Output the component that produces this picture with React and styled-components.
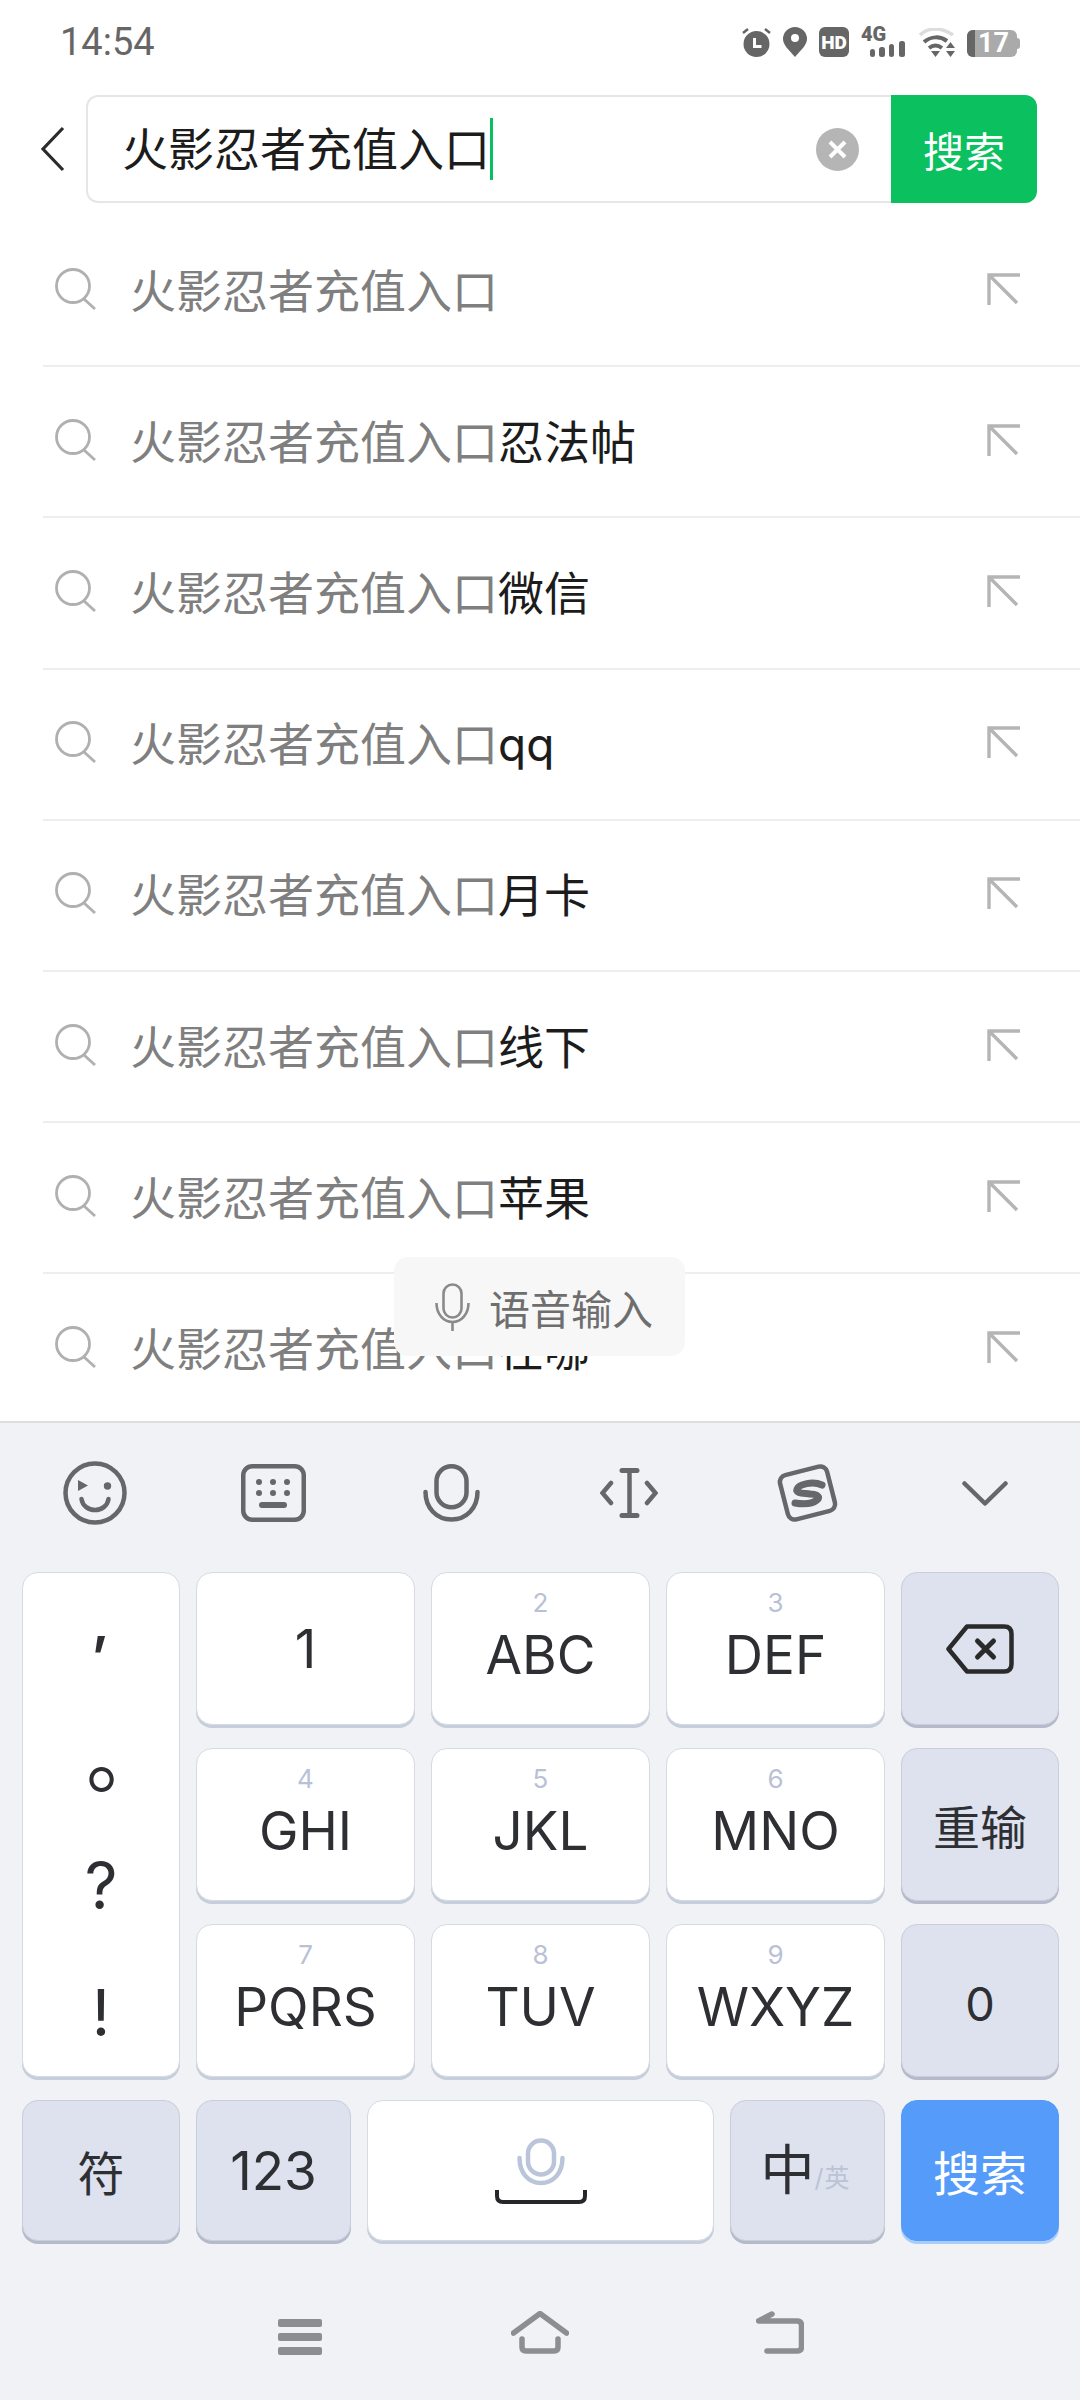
import React from "react";
import styled, { createGlobalStyle } from "styled-components";

const GlobalStyle = createGlobalStyle`
  html, body {
    margin: 0;
    padding: 0;
    background: #ffffff;
  }
  * {
    box-sizing: border-box;
  }
`;

const CJK = `Inter, "Noto Sans CJK SC", sans-serif`;

const Page = styled.div`
  position: relative;
  display: flex;
  flex-direction: column;
  width: 1080px;
  height: 2400px;
  overflow: hidden;
  background: #ffffff;
  font-family: ${CJK};
`;

const StatusBar = styled.div`
  display: flex;
  flex: none;
  align-items: center;
  justify-content: space-between;
  height: 95px;
  padding: 0 60px 11px;
`;

const Time = styled.div`
  font-family: Roboto, sans-serif;
  font-size: 38px;
  color: #666666;
`;

const StatusIcons = styled.div`
  display: flex;
  align-items: flex-end;
  gap: 12px;
  height: 30px;
`;

const HdBadge = styled.div`
  display: flex;
  align-items: center;
  justify-content: center;
  width: 30px;
  height: 30px;
  border-radius: 6px;
  background: #666666;
  color: #ffffff;
  font-family: Roboto, sans-serif;
  font-size: 19px;
  font-weight: 900;
`;

const Network = styled.div`
  display: flex;
  flex-direction: column;
  width: 44px;
  height: 30px;
  margin-right: 2px;
`;

const NetworkLabel = styled.div`
  height: 14px;
  font-family: Roboto, sans-serif;
  font-size: 20px;
  font-weight: 900;
  line-height: 14px;
  color: #666666;
`;

const Battery = styled.div`
  position: relative;
  display: flex;
  width: 50px;
  height: 27px;
  margin-right: 3px;
  border-radius: 6px;
  overflow: visible;
  background: #aaaaaa;
`;

const BatteryLevel = styled.div`
  flex: none;
  width: 8px;
  border-radius: 6px 0 0 6px;
  background: #666666;
`;

const BatteryText = styled.div`
  padding-left: 3px;
  font-family: Roboto, sans-serif;
  font-size: 27px;
  font-weight: 700;
  line-height: 27px;
  color: #ffffff;
`;

const BatteryNub = styled.div`
  position: absolute;
  top: 8px;
  right: -3px;
  width: 3px;
  height: 11px;
  border-radius: 0 3px 3px 0;
  background: #aaaaaa;
`;

const SearchRow = styled.div`
  display: flex;
  flex: none;
  align-items: center;
  height: 108px;
  margin-bottom: 13px;
  padding: 0 43px 0 40px;
`;

const SearchBox = styled.div`
  display: flex;
  flex: 1;
  align-items: center;
  height: 108px;
  margin-left: 21px;
  padding-left: 34px;
  border: 2px solid #e6e6e6;
  border-right: 0;
  border-radius: 12px;
`;

const SearchText = styled.div`
  font-size: 46px;
  line-height: 62px;
  color: #1c1c1c;
`;

const Caret = styled.div`
  width: 3px;
  height: 62px;
  background: #07c160;
`;

const ClearIcon = styled.svg`
  margin-left: auto;
  margin-right: 32px;
`;

const SearchButton = styled.div`
  display: flex;
  align-items: center;
  justify-content: center;
  width: 146px;
  height: 108px;
  margin: -2px 0;
  border-radius: 0 12px 12px 0;
  background: #0bc15f;
  color: #ffffff;
  font-size: 41px;
`;

const List = styled.div`
  flex: 1;
  min-height: 0;
  overflow: hidden;
  padding-left: 43px;
`;

const Row = styled.div`
  display: flex;
  flex: none;
  align-items: center;
  height: 151.200px;
  padding: 0 59px 4px 12px;
  border-bottom: 2px solid ${({ $last }) => ($last ? "transparent" : "#eeeeee")};
`;

const RowText = styled.div`
  flex: 1;
  margin: -2px 0 0 33px;
  font-size: 46px;
  color: #1c1c1c;
`;

const Prefix = styled.span`
  color: #7f7f7f;
`;

const VoiceHint = styled.div`
  position: absolute;
  top: 1257px;
  left: 394px;
  display: flex;
  align-items: center;
  gap: 19px;
  width: 291px;
  height: 99px;
  padding-left: 41px;
  border-radius: 14px;
  background: #f7f7f7;
  color: #6e6e6e;
  font-size: 41px;
`;

const Keyboard = styled.div`
  display: flex;
  flex: none;
  flex-direction: column;
  height: 979px;
  border-top: 2px solid #dedede;
  background: #f0f2f6;
`;

const Toolbar = styled.div`
  display: grid;
  flex: none;
  grid-template-columns: repeat(6, 178px);
  height: 149px;
  padding-left: 6px;
`;

const ToolCell = styled.div`
  display: flex;
  align-items: center;
  justify-content: center;
  height: 140px;
`;

const KeyGrid = styled.div`
  display: grid;
  flex: none;
  grid-template-columns: 158px 219px 219px 219px 158px;
  grid-auto-rows: 153px;
  gap: 23px 16px;
  padding-left: 22px;
`;

const tones = {
  light: { bg: "#ffffff", edge: "#c6cddc", line: "#d6dae2", color: "#2e2f33" },
  grey: { bg: "#dde2ee", edge: "#b4bac9", line: "#c9cedb", color: "#2e2f33" },
  blue: { bg: "#559bf9", edge: "#a9cdfb", line: "#559bf9", color: "#ffffff" }
};

const Key = styled.div`
  display: flex;
  flex-direction: column;
  align-items: center;
  justify-content: ${({ $top }) => ($top ? "flex-start" : "center")};
  padding-top: ${({ $drop = 0 }) => $drop}px;
  border-radius: 16px;
  border: 1px solid ${({ $tone = "light" }) => tones[$tone].line};
  background: ${({ $tone = "light" }) => tones[$tone].bg};
  box-shadow: 0 3px 0 ${({ $tone = "light" }) => tones[$tone].edge};
  color: ${({ $tone = "light" }) => tones[$tone].color};
  font-size: ${({ $size = 53 }) => $size}px;
`;

const PunctKey = styled(Key)`
  grid-column: 1;
  grid-row: 1 / span 3;
  justify-content: flex-start;
`;

const Punct = styled.div`
  display: flex;
  align-items: center;
  justify-content: center;
  height: ${({ $h }) => $h}px;
  font-size: ${({ $size }) => $size}px;
  font-weight: ${({ $weight = 400 }) => $weight};
  line-height: 1;
  transform: translate(${({ $x = 0 }) => $x}px, ${({ $y = 0 }) => $y}px);
`;

const Digit = styled.div`
  height: 26px;
  margin-top: 17px;
  font-size: 26px;
  line-height: 26px;
  color: #b8c1d6;
`;

const Letters = styled.div`
  height: 58px;
  margin-top: 10px;
  line-height: 58px;
`;

const BottomRow = styled.div`
  display: grid;
  flex: none;
  grid-template-columns: 158px 155px 347px 155px 158px;
  grid-auto-rows: 141px;
  gap: 16px;
  margin-top: 23px;
  padding-left: 22px;
`;

const LangKey = styled(Key)`
  flex-direction: row;
  align-items: center;
  justify-content: center;
`;

const LangMain = styled.span`
  margin: -8px 0 0 -4px;
  font-size: 54px;
`;

const LangAlt = styled.span`
  margin-top: 10px;
  font-size: 25px;
  letter-spacing: 1px;
  color: #bbc3d6;
`;

const NavBar = styled.div`
  display: grid;
  flex: 1;
  grid-template-columns: repeat(3, 240px);
  justify-content: center;
  align-items: end;
  padding-bottom: 45px;
`;

const NavCell = styled.div`
  display: flex;
  justify-content: center;
`;

const gray = "#65676b";

const IconBack = () => (
  <svg width="25" height="46" viewBox="0 0 25 46" fill="none" stroke="#2b2b2b" strokeWidth="3.2">
    <path d="M23 2 3 23l20 21" />
  </svg>
);

const IconAlarm = () => (
  <svg width="29" height="29" viewBox="0 0 29 29">
    <circle cx="14.5" cy="16" r="13" fill="#666" />
    <path d="M1 5l5-4M28 5l-5-4" stroke="#666" strokeWidth="2.5" fill="none" />
    <path d="M12.5 10v8.5h7" stroke="#fff" strokeWidth="3" fill="none" />
  </svg>
);

const IconPin = () => (
  <svg width="24" height="30" viewBox="0 0 24 30">
    <path d="M12 30C6 23 0 18 0 12a12 12 0 0 1 24 0c0 6-6 11-12 18z" fill="#666" />
    <circle cx="12" cy="11" r="4" fill="#fff" />
  </svg>
);

const IconBars = () => (
  <svg width="44" height="16" viewBox="0 0 44 16">
    <rect x="9" y="8" width="5" height="8" rx="2.5" fill="#666" />
    <rect x="18" y="6" width="6" height="10" rx="2.5" fill="#666" />
    <rect x="28" y="3" width="5" height="13" rx="2.5" fill="#666" />
    <rect x="38" y="0" width="6" height="16" rx="2.5" fill="#666" />
  </svg>
);

const IconWifi = () => (
  <svg width="36" height="29" viewBox="0 0 36 29" fill="none">
    <path d="M1 7C9-1 23-1 34 7" stroke="#dcdcdc" strokeWidth="3.5" />
    <path d="M5 14c7-6 16-6 23-1" stroke="#666" strokeWidth="4" />
    <path d="M10 20c4-3 9-3 13 0" stroke="#666" strokeWidth="4" />
    <path d="M12 23h9l-4.500 6z" fill="#666" />
    <path d="M27 20h9l-4.500-6zM27 23h9l-4.500 6z" fill="#666" />
  </svg>
);

const IconClear = () => (
  <ClearIcon width="43" height="43" viewBox="0 0 43 43">
    <circle cx="21.500" cy="21.500" r="21.500" fill="#b5b5b5" />
    <path d="M14 14l15 15M29 14 14 29" stroke="#fff" strokeWidth="4" />
  </ClearIcon>
);

const IconSearch = () => (
  <svg width="42" height="42" viewBox="0 0 42 42" fill="none" stroke="#b0b0b0" strokeWidth="2.8">
    <circle cx="18" cy="18" r="16.500" />
    <path d="M29 31l11 10" />
  </svg>
);

const IconFill = () => (
  <svg width="34" height="32" viewBox="0 0 34 32" fill="none" stroke="#b5b5b5" strokeWidth="3.4">
    <path d="M33 2H2v30M3 3l27 27" />
  </svg>
);

const IconVoiceHint = () => (
  <svg width="35" height="48" viewBox="0 0 35 48" fill="none" stroke="#8a8a8a" strokeWidth="2.600">
    <rect x="8.500" y="1.500" width="18" height="33" rx="9" />
    <path d="M1.500 20c0 11 7 19 16 19s16-8 16-19M17.500 39v9" />
  </svg>
);

const IconSmile = () => (
  <svg width="64" height="64" viewBox="0 0 64 64" fill="none" stroke={gray} strokeWidth="4.500" strokeLinecap="round">
    <circle cx="32" cy="32" r="29.500" />
    <path d="M15 19l10 5.500-10 5.500z" fill={gray} stroke="none" />
    <circle cx="44.500" cy="25" r="3.700" fill={gray} stroke="none" />
    <path d="M18.500 38c1 7 7 11 13.500 11s12.500-4 13.500-11" />
  </svg>
);

const IconKeys = () => (
  <svg width="65" height="58" viewBox="0 0 65 58" fill="none" stroke={gray} strokeWidth="4.500">
    <rect x="2.250" y="2.250" width="60.500" height="53.500" rx="9" />
    <g fill={gray} stroke="none">
      <circle cx="18" cy="18" r="3" />
      <circle cx="32" cy="18" r="3" />
      <circle cx="46" cy="18" r="3" />
      <circle cx="18" cy="29" r="3" />
      <circle cx="32" cy="29" r="3" />
      <circle cx="46" cy="29" r="3" />
      <rect x="18" y="38" width="28" height="6" rx="3" />
    </g>
  </svg>
);

const IconMic = () => (
  <svg width="57" height="58" viewBox="0 0 57 58" fill="none" stroke={gray} strokeWidth="4.500" strokeLinecap="round">
    <rect x="13.500" y="2.250" width="30" height="41" rx="15" />
    <path d="M2.500 28c0 16 11 27.500 26 27.500s26-11.500 26-27.500" />
  </svg>
);

const IconCursor = () => (
  <svg width="58" height="50" viewBox="0 0 58 50" fill="none" stroke={gray} strokeWidth="4.500" strokeLinecap="round">
    <path d="M22 2.500h15M22 47.500h15" strokeWidth="5" />
    <path d="M29.500 2.500v45" />
    <path d="M11 15 2.500 25l8.500 10M47 15l8.500 10L47 35" />
  </svg>
);

const IconSogou = () => (
  <svg width="65" height="64" viewBox="0 0 65 64" fill="none">
    <g transform="rotate(-14.300 32.500 32)">
      <rect x="8.250" y="9.200" width="48.500" height="45.600" rx="7" stroke={gray} strokeWidth="4.500" />
    </g>
    <path
      d="M47 24C38 20 24 23 22 28 20 33 30 32 35 33 42 33 46 36 42 39 36 44 26 43 20 42"
      stroke={gray}
      strokeWidth="7"
      strokeLinecap="round"
    />
  </svg>
);

const IconCollapse = () => (
  <svg width="46" height="25" viewBox="0 0 46 25" fill="none" stroke={gray} strokeWidth="4.500" strokeLinecap="round" strokeLinejoin="round">
    <path d="M2.500 2.500 23 22.500 43.500 2.500" />
  </svg>
);

const IconDelete = () => (
  <svg width="68" height="50" viewBox="0 0 68 50" fill="none" stroke="#2a2a2a" strokeWidth="4.500" strokeLinejoin="round">
    <path d="M21 2.500h37c5 0 7.500 2.500 7.500 7.500v30c0 5-2.500 7.500-7.500 7.500H21L2.500 25z" />
    <path d="M31.500 17l16 16M47.500 17l-16 16" strokeWidth="5" strokeLinecap="round" />
  </svg>
);

const IconSpace = () => (
  <svg width="92" height="66" viewBox="0 0 92 66" fill="none">
    <rect x="33" y="2.500" width="26" height="34" rx="13" stroke="#bac5da" strokeWidth="4.500" />
    <path d="M24.500 20c0 15 9 25 21.500 25s21.500-10 21.500-25" stroke="#bac5da" strokeWidth="4.500" strokeLinecap="round" />
    <path d="M2 52v6c0 4 2 6 6 6h76c4 0 6-2 6-6v-6" stroke="#26272a" strokeWidth="4" />
  </svg>
);

const NavMenu = () => (
  <svg width="44" height="36" viewBox="0 0 44 36" fill="#8c8e90">
    <rect width="44" height="8" rx="2" />
    <rect y="14" width="44" height="8" rx="2" />
    <rect y="28" width="44" height="8" rx="2" />
  </svg>
);

const NavHome = () => (
  <svg width="58" height="44" viewBox="0 0 58 44" fill="none" stroke="#8c8e90" strokeWidth="5.500" strokeLinecap="round" strokeLinejoin="round">
    <path d="M2.500 22 29 2.500 55.500 22" />
    <path d="M11 28v8q0 4 4 4h28q4 0 4-4v-8" />
  </svg>
);

const NavReturn = () => (
  <svg width="48" height="44" viewBox="0 0 48 44" fill="none" stroke="#8c8e90" strokeWidth="5.500" strokeLinecap="round" strokeLinejoin="round">
    <path d="M16 3 2.500 10H41q4.500 0 4.500 4.500V36q0 4-4.500 4H11" />
  </svg>
);

const prefix = "火影忍者充值入口";
const suggestions = ["", "忍法帖", "微信", "qq", "月卡", "线下", "苹果", "在哪"];

const tools = [IconSmile, IconKeys, IconMic, IconCursor, IconSogou, IconCollapse];

const letterKeys = [
  { digit: "2", letters: "ABC" },
  { digit: "3", letters: "DEF" }
];

const midRows = [
  [
    { digit: "4", letters: "GHI" },
    { digit: "5", letters: "JKL" },
    { digit: "6", letters: "MNO" }
  ],
  [
    { digit: "7", letters: "PQRS" },
    { digit: "8", letters: "TUV" },
    { digit: "9", letters: "WXYZ" }
  ]
];

const LetterKey = ({ digit, letters }) => (
  <Key $top>
    <Digit>{digit}</Digit>
    <Letters>{letters}</Letters>
  </Key>
);

export default function App() {
  return (
    <Page>
      <GlobalStyle />
      <StatusBar>
        <Time>14:54</Time>
        <StatusIcons>
          <IconAlarm />
          <IconPin />
          <HdBadge>HD</HdBadge>
          <Network>
            <NetworkLabel>4G</NetworkLabel>
            <IconBars />
          </Network>
          <IconWifi />
          <Battery>
            <BatteryLevel />
            <BatteryText>17</BatteryText>
            <BatteryNub />
          </Battery>
        </StatusIcons>
      </StatusBar>

      <SearchRow>
        <IconBack />
        <SearchBox>
          <SearchText>{prefix}</SearchText>
          <Caret />
          <IconClear />
          <SearchButton>搜索</SearchButton>
        </SearchBox>
      </SearchRow>

      <List>
        {suggestions.map((suffix, i) => (
          <Row key={i} $last={i === suggestions.length - 1}>
            <IconSearch />
            <RowText>
              <Prefix>{prefix}</Prefix>
              {suffix}
            </RowText>
            <IconFill />
          </Row>
        ))}
      </List>

      <VoiceHint>
        <IconVoiceHint />
        语音输入
      </VoiceHint>

      <Keyboard>
        <Toolbar>
          {tools.map((Tool, i) => (
            <ToolCell key={i}>
              <Tool />
            </ToolCell>
          ))}
        </Toolbar>

        <KeyGrid>
          <PunctKey>
            <Punct $h={130} $size={56} $weight={600} $y={-16}>,</Punct>
            <Punct $h={124} $size={80} $x={25} $y={-8}>。</Punct>
            <Punct $h={112} $size={64} $y={3}>?</Punct>
            <Punct $h={120} $size={64} $y={14}>!</Punct>
          </PunctKey>
          <Key>1</Key>
          {letterKeys.map(k => (
            <LetterKey key={k.digit} {...k} />
          ))}
          <Key $tone="grey">
            <IconDelete />
          </Key>
          {midRows[0].map(k => (
            <LetterKey key={k.digit} {...k} />
          ))}
          <Key $tone="grey" $size={47}>
            重输
          </Key>
          {midRows[1].map(k => (
            <LetterKey key={k.digit} {...k} />
          ))}
          <Key $tone="grey" $size={47} $drop={6}>
            0
          </Key>
        </KeyGrid>

        <BottomRow>
          <Key $tone="grey" $size={47}>
            符
          </Key>
          <Key $tone="grey">123</Key>
          <Key>
            <IconSpace />
          </Key>
          <LangKey $tone="grey">
            <LangMain>中</LangMain>
            <LangAlt>/英</LangAlt>
          </LangKey>
          <Key $tone="blue" $size={47}>
            搜索
          </Key>
        </BottomRow>

        <NavBar>
          <NavCell>
            <NavMenu />
          </NavCell>
          <NavCell>
            <NavHome />
          </NavCell>
          <NavCell>
            <NavReturn />
          </NavCell>
        </NavBar>
      </Keyboard>
    </Page>
  );
}
